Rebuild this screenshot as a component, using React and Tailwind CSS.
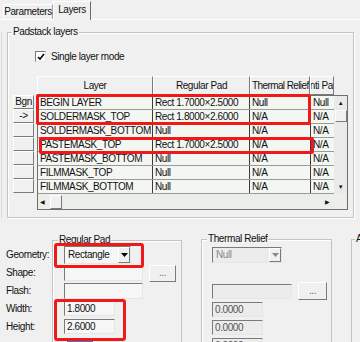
import React from "react";

const raised =
  "border border-t-white border-l-white border-r-[#7a7a7a] border-b-[#7a7a7a] bg-[#f0f0f0]";
const sunken =
  "border border-t-[#7a7a7a] border-l-[#7a7a7a] border-r-[#e6e6e6] border-b-[#e6e6e6]";

const rows = [
  { btn: "Bgn", layer: "BEGIN LAYER", pad: "Rect 1.7000\u00d72.5000", thermal: "Null", anti: "Null" },
  { btn: "->", layer: "SOLDERMASK_TOP", pad: "Rect 1.8000\u00d72.6000", thermal: "N/A", anti: "N/A" },
  { btn: "", layer: "SOLDERMASK_BOTTOM", pad: "Null", thermal: "N/A", anti: "N/A" },
  { btn: "", layer: "PASTEMASK_TOP", pad: "Rect 1.7000\u00d72.5000", thermal: "N/A", anti: "N/A" },
  { btn: "", layer: "PASTEMASK_BOTTOM", pad: "Null", thermal: "N/A", anti: "N/A" },
  { btn: "", layer: "FILMMASK_TOP", pad: "Null", thermal: "N/A", anti: "N/A" },
  { btn: "", layer: "FILMMASK_BOTTOM", pad: "Null", thermal: "N/A", anti: "N/A" },
];

const Arrow = ({ gray }) => (
  <svg width="7" height="4" viewBox="0 0 7 4">
    <path d="M0 0h7L3.5 4z" fill={gray ? "#8a8a8a" : "#000"} />
  </svg>
);

const Combo = ({ value, w, h, gray }) => (
  <div className={`flex ${sunken} ${gray ? "bg-[#ececec]" : "bg-[#f6f6f6]"} ${w} ${h}`}>
    <div className={`flex flex-1 items-center pl-[3px] ${gray ? "text-[#8a8a8a]" : ""}`}>{value}</div>
    <div className={`flex w-[12px] items-center justify-center ${raised}`}>
      <Arrow gray={gray} />
    </div>
  </div>
);

const Field = ({ value = "", w, h = "h-[15px]", gray }) => (
  <div className={`flex items-center pl-[2px] ${sunken} ${gray ? "bg-[#ececec] text-[#555]" : "bg-[#f6f6f6]"} ${w} ${h}`}>
    {value}
  </div>
);

const Dots = ({ w, h }) => (
  <div className={`flex items-end justify-center pb-[3px] text-[#666] ${raised} ${w} ${h}`}>...</div>
);

const Legend = ({ text, left }) => (
  <span className={`absolute -top-[6px] ${left} whitespace-nowrap bg-[#f0f0f0] px-[1px]`}>{text}</span>
);

export default function App() {
  return (
    <div className="relative h-[342px] w-[360px] overflow-hidden bg-[#f0f0f0] text-[10px] leading-none tracking-[-0.4px] text-[#111] font-['Liberation_Sans',Arial,sans-serif]">
      {/* tabs */}
      <div className="flex h-[20px] items-end border-b border-white pl-[3px]">
        <div className="flex h-[15px] w-[50px] items-center justify-center border-l border-t border-r border-l-white border-t-white border-r-[#a0a0a0]">
          Parameters
        </div>
        <div className="relative -mb-px flex h-[19px] w-[38px] items-center justify-center border-l border-t border-r border-l-white border-t-white border-r-[#6a6a6a] bg-[#f0f0f0] pb-[2px]">
          Layers
        </div>
      </div>

      <div className="ml-px border-l border-[#dcdcdc] pl-[5px]">
        {/* Padstack layers */}
        <div className="relative mt-[12px] h-[186px] w-[347px] border border-[#c4c4c4] shadow-[1px_1px_0_#fff,inset_1px_1px_0_#fff]">
          <Legend text="Padstack layers" left="left-[4px]" />
          <div className="flex items-center pl-[27px] pt-[18px]">
            <div className={`flex h-[11px] w-[11px] items-center justify-center bg-white ${sunken}`}>
              <svg width="8" height="8" viewBox="0 0 8 8">
                <path d="M1 4l2 2 4-5" fill="none" stroke="#000" strokeWidth="1.6" />
              </svg>
            </div>
            <span className="ml-[5px]">Single layer mode</span>
          </div>

          <div className="mt-[14px] flex pl-[5px]">
            <div className="mr-[3px] flex w-[21px] shrink-0 flex-col">
              <div className="h-[19px]" />
              {rows.map((r, i) => (
                <div key={i} className={`flex h-[14px] items-center justify-center ${raised}`}>
                  {r.btn}
                </div>
              ))}
            </div>

            <div className="flex w-[311px] shrink-0 flex-col">
              <div className="flex h-[19px]">
                <div className={`flex w-[116px] items-center justify-center ${raised}`}>Layer</div>
                <div className={`flex w-[97px] items-center justify-center ${raised}`}>Regular Pad</div>
                <div className={`flex w-[60px] items-center overflow-hidden whitespace-nowrap pl-px tracking-[-0.6px] ${raised}`}>
                  Thermal Relief
                </div>
                <div className={`flex w-[24px] items-center justify-end overflow-hidden whitespace-nowrap ${raised}`}>
                  nti Pa
                </div>
              </div>

              <div className="flex h-[115px] flex-col border border-[#6f6f6f] bg-[#ecefea]">
                <div className="flex h-[98px]">
                  <div className="flex w-[296px] flex-col bg-[#f4f6f2]">
                    {rows.map((r, i) => (
                      <div key={i} className="flex h-[14px] border-b border-[#9a9a9a] whitespace-nowrap">
                        <div className="flex w-[115px] items-center overflow-hidden border-r border-[#3c3c3c] pl-[2px]">{r.layer}</div>
                        <div className="flex w-[97px] items-center overflow-hidden border-r border-[#3c3c3c] pl-[2px]">{r.pad}</div>
                        <div className="flex w-[61px] items-center overflow-hidden border-r border-[#3c3c3c] pl-[2px]">{r.thermal}</div>
                        <div className="flex w-[23px] items-center overflow-hidden pl-[2px]">{r.anti}</div>
                      </div>
                    ))}
                  </div>
                  {/* vertical scrollbar */}
                  <div className="flex w-[13px] flex-col items-center bg-[#eaeaea]">
                    <div className="flex h-[14px] items-center text-[6px]">▲</div>
                    <div className={`h-[12px] w-[12px] ${raised}`} />
                    <div className="flex-1" />
                    <div className="flex h-[14px] items-center text-[6px]">▼</div>
                  </div>
                </div>
                {/* horizontal scrollbar */}
                <div className="flex h-[15px] w-[296px] items-center bg-[#eceeea]">
                  <span className="w-[12px] pl-[2px] text-[6px]">◀</span>
                  <div className={`h-[14px] w-[12px] ${raised}`} />
                  <div className="flex-1" />
                  <span className="w-[9px] text-[6px]">▶</span>
                </div>
              </div>
            </div>
          </div>
        </div>
      </div>

      {/* lower section */}
      <div className="flex pl-[2px]">
        <div className="flex w-[50px] shrink-0 flex-col pl-[4px] pt-[28px]">
          {["Geometry:", "Shape:", "Flash:", "Width:", "Height:"].map((l) => (
            <div key={l} className="flex h-[18px] items-center">{l}</div>
          ))}
        </div>

        <div className="relative mt-[22px] h-[140px] w-[130px] shrink-0 border border-[#c4c4c4] pl-[11px] pt-[5px] shadow-[inset_1px_1px_0_#fff]">
          <Legend text="Regular Pad" left="left-[5px]" />
          <div className="flex h-[18px]">
            <Combo value="Rectangle" w="w-[67px]" h="h-[18px]" />
          </div>
          <div className="flex h-[18px] items-start pt-px">
            <Field w="w-[79px]" h="h-[16px]" />
            <div className="ml-[6px]"><Dots w="w-[27px]" h="h-[17px]" /></div>
          </div>
          <div className="flex h-[18px] items-start pt-px">
            <Field w="w-[79px]" h="h-[16px]" />
          </div>
          <div className="flex h-[18px] items-start pt-px">
            <Field value="1.8000" w="w-[51px]" />
          </div>
          <div className="flex h-[18px] items-start pt-px">
            <Field value="2.6000" w="w-[51px]" />
          </div>
          <div className="flex h-[18px] items-start pl-[3px] pt-[2px]">
            <div className="h-[14px] w-[26px] bg-[#2f7de1]" />
          </div>
        </div>

        <div className="relative ml-[19px] mt-[21px] h-[140px] w-[131px] shrink-0 border border-[#c4c4c4] pl-[10px] pt-[6px] shadow-[inset_1px_1px_0_#fff]">
          <Legend text="Thermal Relief" left="left-[5px]" />
          <div className="flex h-[18px] items-start pt-px">
            <Combo value="Null" w="w-[70px]" h="h-[16px]" gray />
          </div>
          <div className="h-[18px]" />
          <div className="flex h-[18px] items-start">
            <div className="pt-[2px]"><Field w="w-[80px]" gray /></div>
            <div className="ml-[6px]"><Dots w="w-[29px]" h="h-[18px]" /></div>
          </div>
          <div className="flex h-[18px] items-start pt-[2px]">
            <Field value="0.0000" w="w-[51px]" gray />
          </div>
          <div className="flex h-[18px] items-start pt-[2px]">
            <Field value="0.0000" w="w-[51px]" gray />
          </div>
          <div className="flex h-[18px] items-start pt-[2px]">
            <Field value="0.0000" w="w-[51px]" gray />
          </div>
        </div>

        <div className="relative ml-[19px] mt-[21px] h-[140px] w-[40px] shrink-0 border border-[#c4c4c4]">
          <Legend text="Anti Pad" left="left-[3px]" />
        </div>
      </div>

      {/* red annotation boxes */}
      <div className="absolute left-[36px] top-[94px] h-[31px] w-[275px] rounded-[2px] border-[3px] border-[#f01818]" />
      <div className="absolute left-[39px] top-[137px] h-[17px] w-[275px] rounded-[2px] border-[3px] border-[#f01818]" />
      <div className="absolute left-[54px] top-[243px] h-[25px] w-[90px] rounded-[3px] border-[3px] border-[#f01818]" />
      <div className="absolute left-[54px] top-[299px] h-[42px] w-[72px] rounded-[3px] border-[3px] border-[#f01818]" />
    </div>
  );
}
